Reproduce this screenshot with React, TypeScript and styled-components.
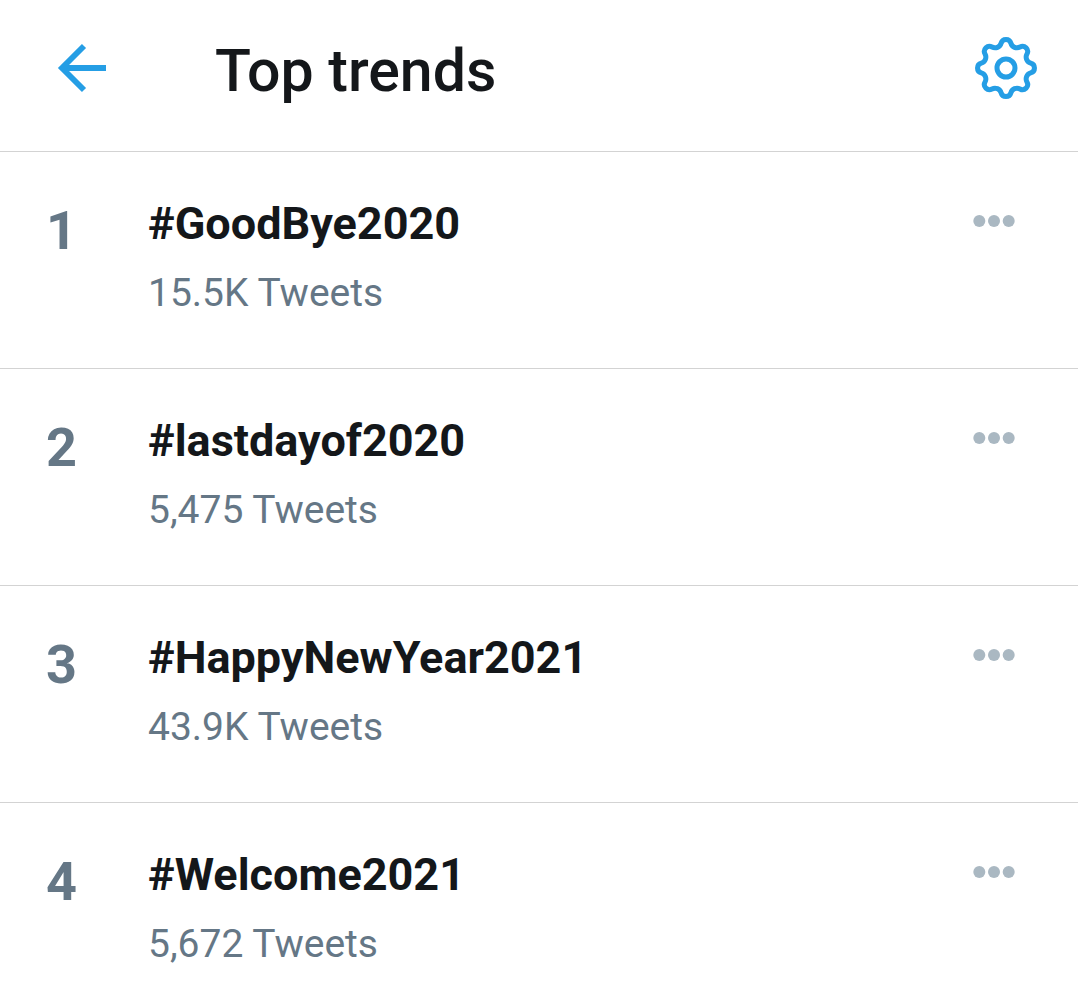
import React from 'react';
import styled, { createGlobalStyle } from 'styled-components';

const GlobalStyle = createGlobalStyle`
  *, *::before, *::after { box-sizing: border-box; }
  body { margin: 0; background: #ffffff; font-family: Roboto, "Liberation Sans", sans-serif; }
`;

const Header = styled.header`
  display: flex;
  align-items: center;
  height: 152px;
  padding: 0 39px 16px 48px;
  border-bottom: 1px solid #d3d3d3;
`;

const IconButton = styled.button`
  display: flex;
  padding: 0;
  border: 0;
  background: none;
  color: #259ee5;
  cursor: pointer;
`;

const Title = styled.h1`
  flex: 1;
  margin: 0 0 0 99px;
  padding-top: 6px;
  color: #14171a;
  font-size: 59px;
  line-height: 72px;
  font-weight: 500;
`;

const TrendList = styled.ol`
  margin: 0;
  padding: 0;
  list-style: none;
`;

const TrendRow = styled.li`
  display: flex;
  align-items: flex-start;
  padding: 40px 60px 46px 46px;

  & + & { border-top: 1px solid #d3d3d3; }
`;

const Rank = styled.span`
  flex: none;
  width: 102px;
  padding-top: 8px;
  color: #657786;
  font-size: 54px;
  line-height: 62px;
  font-weight: 700;
`;

const TrendText = styled.div`
  flex: 1;
  min-width: 0;
`;

const TrendName = styled.a`
  display: block;
  color: #14171a;
  font-size: 45px;
  line-height: 64px;
  font-weight: 700;
  text-decoration: none;
`;

const TweetCount = styled.p`
  margin: 8px 0 0;
  color: #657786;
  font-size: 39px;
  line-height: 58px;
`;

const MoreButton = styled(IconButton)`
  padding-top: 20px;
  color: #aab8c2;
`;

const trends = [
  { name: '#GoodBye2020', count: '15.5K Tweets' },
  { name: '#lastdayof2020', count: '5,475 Tweets' },
  { name: '#HappyNewYear2021', count: '43.9K Tweets' },
  { name: '#Welcome2021', count: '5,672 Tweets' },
];

const rimPoint = (degrees: number) => {
  const a = (degrees * Math.PI) / 180;
  return `${(33 + 25.2 * Math.sin(a)).toFixed(2)} ${(33 - 25.2 * Math.cos(a)).toFixed(2)}`;
};

// Each tooth is a tight outward arc followed by a wider inward arc.
const gearPath = `M${rimPoint(-11.25)}${Array.from({ length: 8 }, (_, i) => {
  const centre = i * 45;
  return `A5.1 5.1 0 0 1 ${rimPoint(centre + 11.25)}A6.3 6.3 0 0 0 ${rimPoint(centre + 33.75)}`;
}).join('')}Z`;

const BackIcon = () => (
  <svg width="68" height="68" viewBox="0 0 68 68" fill="none" stroke="currentColor" strokeWidth="5.8" aria-hidden="true">
    <path d="M58 34H14M36 12L14 34l22 22" />
  </svg>
);

const GearIcon = () => (
  <svg width="66" height="66" viewBox="0 0 66 66" fill="none" stroke="currentColor" strokeWidth="5" strokeLinejoin="round" aria-hidden="true">
    <path d={gearPath} />
    <circle cx="33" cy="33" r="9" />
  </svg>
);

const MoreIcon = () => (
  <svg width="46" height="18" viewBox="0 0 46 18" fill="currentColor" aria-hidden="true">
    <circle cx="7.3" cy="9" r="6" />
    <circle cx="22" cy="9" r="6" />
    <circle cx="36.7" cy="9" r="6" />
  </svg>
);

export default function App() {
  return (
    <>
      <GlobalStyle />
      <Header>
        <IconButton aria-label="Back"><BackIcon /></IconButton>
        <Title>Top trends</Title>
        <IconButton aria-label="Trend settings"><GearIcon /></IconButton>
      </Header>
      <main>
        <TrendList>
          {trends.map((trend, index) => (
            <TrendRow key={trend.name}>
              <Rank>{index + 1}</Rank>
              <TrendText>
                <TrendName href="#">{trend.name}</TrendName>
                <TweetCount>{trend.count}</TweetCount>
              </TrendText>
              <MoreButton aria-label={`More options for ${trend.name}`}><MoreIcon /></MoreButton>
            </TrendRow>
          ))}
        </TrendList>
      </main>
    </>
  );
}
